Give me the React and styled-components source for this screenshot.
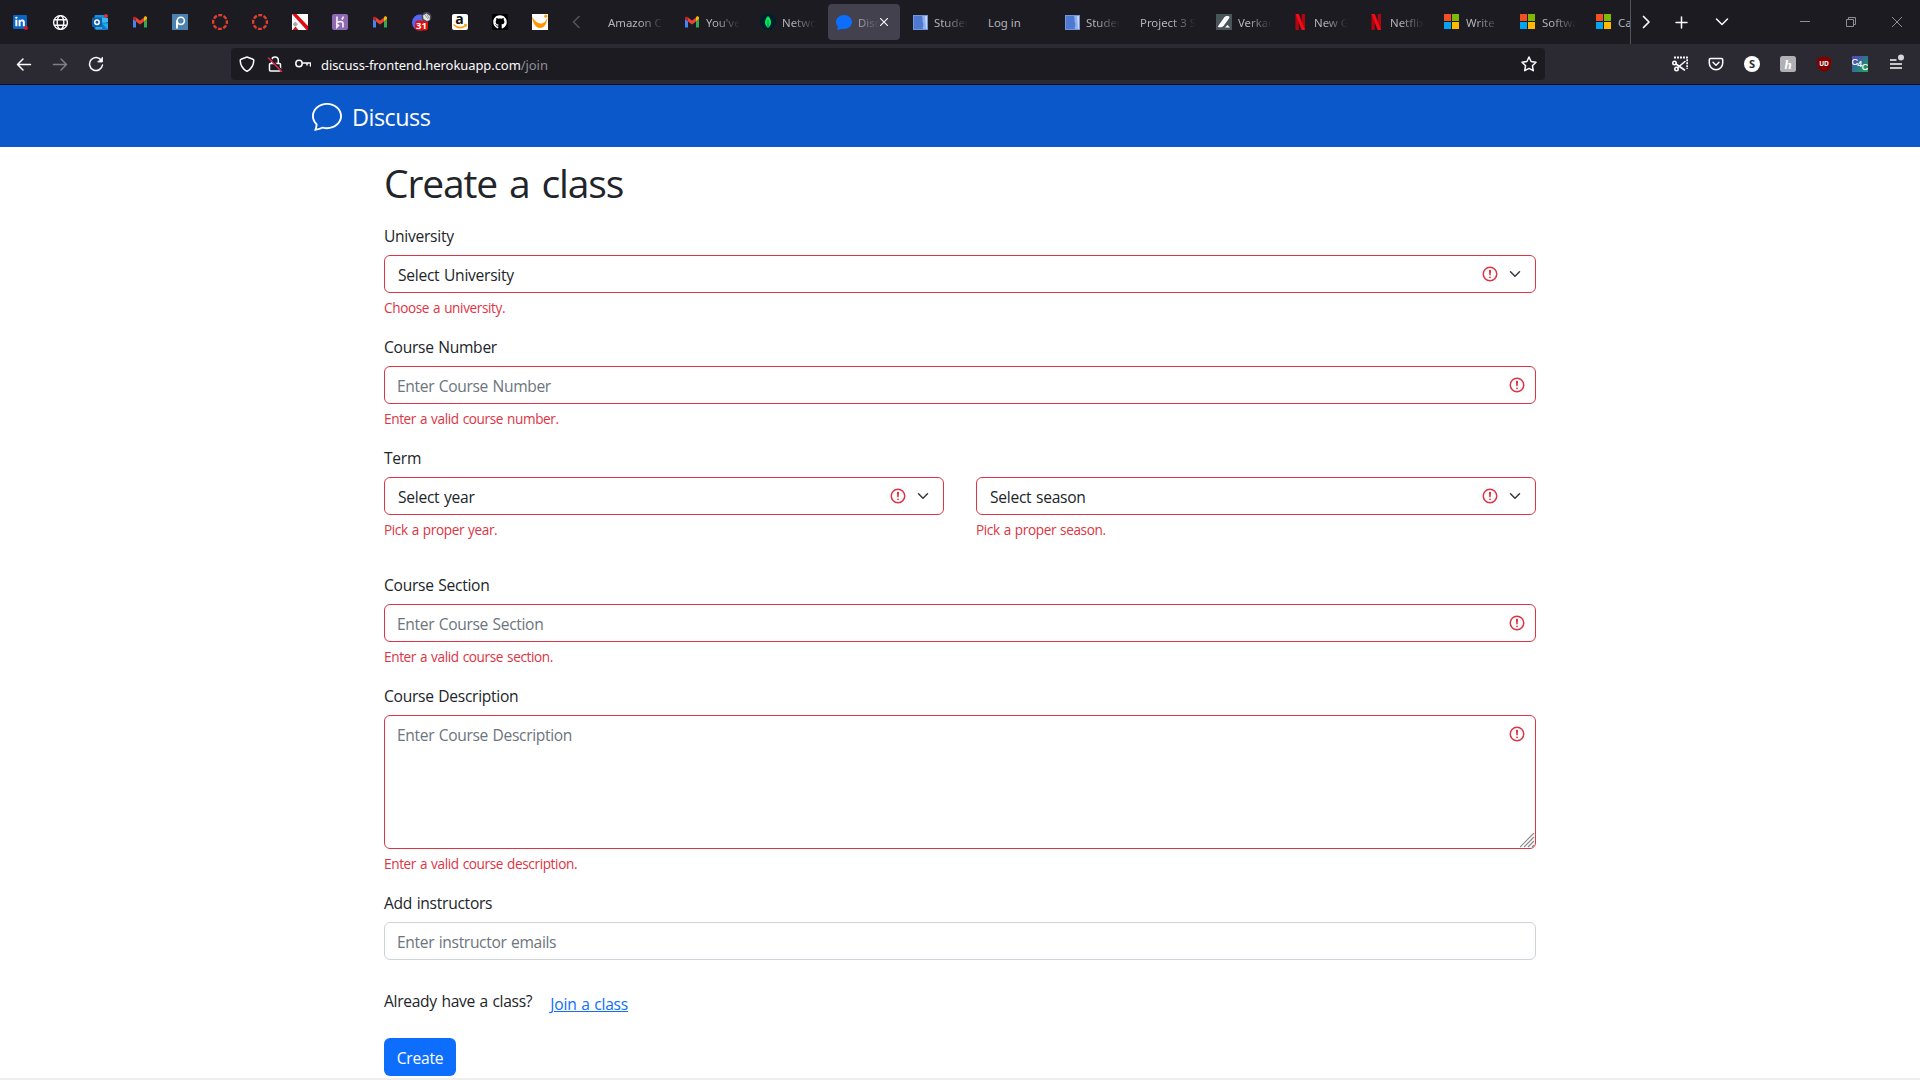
import React from "react";
import styled, { createGlobalStyle, css } from "styled-components";
import { BsChat, BsChatFill } from "react-icons/bs";
import { FaLinkedinIn, FaGithub } from "react-icons/fa";

const Global = createGlobalStyle`
  * { box-sizing: border-box; }
  html, body { margin: 0; padding: 0; height: 1080px; overflow: hidden; background: #fff; }
  body { font-family: "Open Sans", "Noto Sans", sans-serif; color: #212529; }
  svg { display: block; flex: none; }
`;

const Screen = styled.div`
  width: 1920px;
  height: 1080px;
  display: flex;
  flex-direction: column;
  overflow: hidden;
  border-bottom: 2px solid #eeeeee;
`;

/* ---------- browser tab strip ---------- */
const TabStrip = styled.div`
  height: 44px;
  flex: none;
  display: flex;
  align-items: stretch;
  background: #1c1b22;
  color: #fbfbfe;
`;
const PinnedTab = styled.div`
  width: 40px;
  display: flex;
  align-items: center;
  justify-content: center;
`;
const ScrollButton = styled.div`
  width: ${(p) => p.$w}px;
  display: flex;
  align-items: center;
  justify-content: center;
  padding-right: ${(p) => p.$shift ?? 0}px;
  opacity: ${(p) => (p.$dim ? 0.25 : 1)};
`;
const TabList = styled.div`
  width: 1033px;
  display: flex;
  overflow: hidden;
  border-right: 1px solid #55545c;
`;
const Tab = styled.div`
  flex: none;
  width: 72px;
  height: 36px;
  margin: 4px 2px;
  padding: 0 8px;
  display: flex;
  align-items: center;
  gap: 6px;
  border-radius: 4px;
  ${(p) => p.$active && css`background: #42414d;`}
`;
const TabLabel = styled.span`
  flex: 1;
  min-width: 0;
  overflow: hidden;
  white-space: nowrap;
  padding-top: 1px;
  font: 11.4px/18px "Noto Sans", sans-serif;
  color: #b4b4ba;
  ${(p) => !p.$whole && css`mask-image: linear-gradient(to left, transparent, #000 24px);`}
`;
const TabClose = styled.span`
  display: flex;
  margin: 0 4px 0 -6px;
`;
const WindowButtons = styled.div`
  flex: 1;
  display: flex;
  justify-content: flex-end;
`;
const WindowButton = styled.div`
  width: 46px;
  display: flex;
  align-items: center;
  justify-content: center;
`;

/* ---------- browser toolbar ---------- */
const Toolbar = styled.div`
  height: 41px;
  flex: none;
  display: flex;
  align-items: center;
  padding: 0 6px;
  background: #2b2a33;
  border-bottom: 1px solid #0c0c0d;
`;
const ToolButton = styled.div`
  width: 36px;
  height: 32px;
  display: flex;
  align-items: center;
  justify-content: center;
  opacity: ${(p) => (p.$dim ? 0.4 : 1)};
`;
const UrlBar = styled.div`
  width: 1314px;
  height: 32px;
  margin: 0 117px 0 117px;
  padding: 0 8px;
  display: flex;
  align-items: center;
  gap: 12px;
  border-radius: 4px;
  background: #1c1b22;
`;
const Url = styled.div`
  flex: 1;
  margin-left: -2px;
  padding-top: 2px;
  font: 13px/20px "Noto Sans", sans-serif;
  letter-spacing: -0.07px;
  color: #fbfbfe;
  span { color: #8f8f98; }
`;

/* ---------- site header ---------- */
const SiteHeader = styled.header`
  height: 62px;
  flex: none;
  display: flex;
  align-items: center;
  gap: 10px;
  padding-left: 312px;
  background: #0a58ca;
  color: #fff;
`;
const Brand = styled.span`
  padding-top: 2px;
  font-size: 23.4px;
  line-height: 36px;
  letter-spacing: -0.5px;
`;

/* ---------- form ---------- */
const Form = styled.form`
  width: 1152px;
  margin: 0 auto;
  padding-top: 12px;
  letter-spacing: -0.28px;
  word-spacing: 0.8px;
`;
const Title = styled.h1`
  margin: 0 0 16px;
  font-size: 39px;
  line-height: 48px;
  font-weight: 400;
  letter-spacing: -1.15px;
  word-spacing: 3px;
`;
const Field = styled.div`
  margin-bottom: ${(p) => p.$gap ?? 16}px;
`;
const Label = styled.label`
  display: block;
  padding-top: 1px;
  margin-bottom: 7px;
  font-size: 15.6px;
  line-height: 24px;
`;
const Box = styled.div`
  display: flex;
  align-items: ${(p) => (p.$tall ? "flex-start" : "center")};
  height: ${(p) => (p.$tall ? 134 : 38)}px;
  padding: ${(p) => (p.$tall ? "9px" : "0")} ${(p) => (p.$select ? 12 : 9)}px ${(p) => (p.$tall ? "9px" : "0")} 12px;
  border: 1px solid ${(p) => (p.$invalid ? "#dc3545" : "#ced4da")};
  border-radius: 6px;
  position: relative;
`;
const control = css`
  flex: 1;
  min-width: 0;
  border: 0;
  outline: 0;
  padding: 2px 0 0;
  margin: 0;
  background: transparent;
  font-family: inherit;
  font-size: 15.6px;
  line-height: 24px;
  letter-spacing: -0.34px;
  word-spacing: 0.8px;
  color: #212529;
  &::placeholder { color: #6c757d; opacity: 1; }
`;
const Input = styled.input`${control} height: 26px;`;
const TextArea = styled.textarea`${control} height: 116px; resize: none; margin-top: -4px;`;
const Select = styled.select`${control} appearance: none; height: 26px; padding-left: 1px; letter-spacing: -0.27px;`;
const Grip = styled.div`
  position: absolute;
  right: 0;
  bottom: 0;
`;
const Chevron = styled.span`
  display: flex;
  margin-left: 8px;
`;
const Feedback = styled.div`
  padding-top: 4px;
  font-size: 13.6px;
  line-height: 21px;
  letter-spacing: -0.38px;
  word-spacing: 0.8px;
  color: #dc3545;
`;
const Row = styled.div`
  display: grid;
  grid-template-columns: 1fr 1fr;
  gap: 32px;
`;
const JoinRow = styled.div`
  display: flex;
  align-items: flex-start;
  gap: 17px;
  height: 24px;
  margin: 29px 0 25px;
  font-size: 15.6px;
  line-height: 24px;
  letter-spacing: -0.3px;
`;
const JoinLink = styled.a`
  color: #0d6efd;
  text-decoration: underline;
  margin: 3px 0 0 1px;
  letter-spacing: -0.22px;
`;
const CreateButton = styled.button`
  display: block;
  width: 72px;
  height: 38px;
  padding: 2px 0 0;
  border: 0;
  border-radius: 6px;
  background: #0d6efd;
  color: #fff;
  font-family: inherit;
  font-size: 15.6px;
  line-height: 24px;
  letter-spacing: -0.2px;
`;

/* ---------- icons ---------- */
const Svg = ({ s = 16, children, ...rest }) => (
  <svg width={s} height={s} viewBox="0 0 16 16" fill="none" {...rest}>{children}</svg>
);
const Line = (p) => <Svg stroke="#fbfbfe" strokeWidth="1.2" strokeLinecap="round" strokeLinejoin="round" {...p} />;

const Alert = () => (
  <svg width="18" height="18" viewBox="0 0 12 12" fill="none" stroke="#dc3545">
    <circle cx="6" cy="6" r="4.5" />
    <path strokeLinejoin="round" d="M5.8 3.6h.4L6 6.5z" />
    <circle cx="6" cy="8.2" r=".6" fill="#dc3545" stroke="none" />
  </svg>
);
const Down = () => (
  <svg width="16" height="12" viewBox="0 0 16 16" fill="none" stroke="#343a40" strokeWidth="2" strokeLinecap="round" strokeLinejoin="round">
    <path d="m2 5 6 6 6-6" />
  </svg>
);
const Gmail = () => (
  <Svg>
    <path d="M1 13.4h3V7.2L1 4.9z" fill="#4285f4" />
    <path d="M12 13.4h3V4.9l-3 2.3z" fill="#34a853" />
    <path d="M12 3.6v3.7l3-2.3V4c0-1.500-1.600-2.200-2.600-1.300z" fill="#fbbc04" />
    <path d="M4 7.400V3.600l4 3 4-3v3.800l-4 3z" fill="#ea4335" />
    <path d="M1 4v1l3 2.300V3.600l-.5-.5C2.500 2.200 1 2.700 1 4z" fill="#c5221f" />
  </Svg>
);
const LinkedIn = () => (
  <Svg>
    <rect x="1" y="1" width="14" height="14" rx="1" fill="#0a66c2" />
    <FaLinkedinIn x="2.500" y="2.500" size="11" color="#fff" />
    <circle cx="14" cy="14" r="2" fill="#d7181f" />
  </Svg>
);
const Globe = () => (
  <Line strokeWidth="1.4">
    <circle cx="8.500" cy="8.500" r="6.900" />
    <ellipse cx="8.500" cy="8.500" rx="3.300" ry="6.900" />
    <path d="M2.400 5.800h12.200M2.400 11.200h12.200" />
  </Line>
);
const Outlook = () => (
  <Svg>
    <rect x="2.500" y="1" width="12" height="14.500" rx="1" fill="#1490df" />
    <path d="M9 4h7v4.500H9z" fill="#35b8f1" />
    <path d="M4 12l12-3v6.500H4z" fill="#28a8ea" />
    <path d="M10 9.500l6 6h-6z" fill="#1478c8" />
    <rect x="0" y="3.500" width="10" height="9.500" rx="1" fill="#0f5ea8" />
    <circle cx="5" cy="8.200" r="2.200" stroke="#fff" strokeWidth="1.500" />
    <circle cx="14" cy="2" r="2" fill="#d13438" />
  </Svg>
);
const Pearson = () => (
  <Svg>
    <rect width="16" height="16" fill="#4c82ad" />
    <circle cx="8.800" cy="6.800" r="3.600" stroke="#fff" strokeWidth="1.600" />
    <path d="M5 6.500V14.500" stroke="#fff" strokeWidth="2" />
  </Svg>
);
const Canvas = () => (
  <Svg><circle cx="8" cy="8" r="6.900" stroke="#e13f2b" strokeWidth="2.400" strokeDasharray="3.900 1.519" strokeDashoffset="1.950" /></Svg>
);
const Slash = () => (
  <Svg>
    <rect width="16" height="16" fill="#fff" />
    <path d="M0 0h4.500L16 12v4h-1.500z" fill="#e00b12" />
    <path d="M3.300 7.500l2.700 2.700-2 2H2.200L.8 10.200z" fill="#aaa" />
    <path d="M3.500 12.500l3 3.500H.5z" fill="#c9171b" />
  </Svg>
);
const Heroku = () => (
  <Svg>
    <rect width="16" height="16" rx="2" fill="#8d69b0" />
    <path d="M5 2.500v6c2-1 6-1.500 6 1v4M4.800 10v3.300l1.700-1.700zM11.200 2.500c0 1.200-.5 2.200-1.400 3" stroke="#f0eaf6" strokeWidth="1.700" />
  </Svg>
);
const CalendarSlot = styled.span`
  display: flex;
  margin-left: 4px;
`;
const Calendar = () => (
  <CalendarSlot>
    <svg width="20" height="20" viewBox="0 0 20 20">
      <circle cx="8" cy="10.500" r="8" fill="#5865f2" />
      <rect x="3" y="8.500" width="13" height="10" rx="3" fill="#e01010" />
      <text x="9.500" y="17.300" textAnchor="middle" fontSize="9.500" fontWeight="700" fill="#fff" fontFamily="Open Sans, sans-serif">31</text>
      <circle cx="14.500" cy="5" r="5" fill="#4a4952" />
      <path d="M11 3.500l3.500-2 3.500 2.500-.5 4-2.500 1-3.500-2z" fill="#e6e6e6" />
      <path d="M13 3l3 4M15 2.500l2 3.500" stroke="#777" strokeWidth=".7" />
    </svg>
  </CalendarSlot>
);
const Amazon = () => (
  <Svg>
    <rect width="16" height="16" rx="2" fill="#fff" />
    <text x="7.600" y="9.800" textAnchor="middle" fontSize="14" fontWeight="700" fill="#111" fontFamily="Open Sans, sans-serif">a</text>
    <path d="M2 11c3.500 3.200 8 3.200 11.500.6" stroke="#f90" strokeWidth="1.500" strokeLinecap="round" />
    <path d="M12 10.400l2.400-.1-.5 2.600" stroke="#f90" strokeWidth="1" />
  </Svg>
);
const GitHub = () => (
  <Svg>
    <rect width="16" height="16" rx="1.500" fill="#000" />
    <FaGithub x="1" y="1" size="14" color="#fff" />
  </Svg>
);
const Smile = () => (
  <Svg>
    <rect width="16" height="16" fill="#fff" />
    <path d="M0 2.500c.5 6 3.500 11.500 8 11.500s6.500-4 7.500-10.500c-2 4.500-4 6-7 6S2.500 7 0 2.500z" fill="#ff9500" />
    <circle cx="13.800" cy="2.200" r="1.600" fill="#ff9f1c" />
  </Svg>
);
const Mongo = () => (
  <Svg>
    <circle cx="8" cy="8" r="8" fill="#001e2b" />
    <path d="M8 2c4 4 4 8.500 0 12-4-3.500-4-8 0-12z" fill="#00ed64" />
    <path d="M8 6v7" stroke="#007a3c" strokeWidth="1" />
  </Svg>
);
const Doc = () => (
  <Svg>
    <rect x="1" y="1" width="15" height="15" fill="#4f78d0" />
    <path d="M10 2h4v13h-3c-1-2 1-3 0-6s0-5-1-7z" fill="#8fb0ea" />
    <path d="M13 2h2v13h-1z" fill="#c5d6f5" />
    <rect x="1.500" y="1.500" width="14" height="14" stroke="#7295dd" />
  </Svg>
);
const Pen = () => (
  <Svg>
    <rect width="16" height="16" fill="#4a5559" />
    <path d="M1.800 12.500L8.500 3c1.200-1.700 6-1.500 5 .8L7.500 12c-1 1.300-4.500 2-5.700.5z" fill="#fff" />
    <path d="M9 13.500l2.500-2.500 2.500 2.500z" fill="#fff" />
  </Svg>
);
const Netflix = () => (
  <Svg>
    <path d="M3.500 0h3.300v16H3.500zM9.700 0H13v16H9.700z" fill="#b1060f" />
    <path d="M3.500 0h3.300L13 16H9.700z" fill="#f50a17" />
  </Svg>
);
const Microsoft = () => (
  <Svg>
    <path d="M0 0h7v7H0z" fill="#f25022" /><path d="M8 0h7v7H8z" fill="#7fba00" />
    <path d="M0 8h7v7H0z" fill="#00a4ef" /><path d="M8 8h7v7H8z" fill="#ffb900" />
  </Svg>
);
const Discuss = () => <BsChatFill size={16} color="#0d6efd" />;

const PINNED = [LinkedIn, Globe, Outlook, Gmail, Pearson, Canvas, Canvas, Slash, Heroku, Gmail, Calendar, Amazon, GitHub, Smile];
const TABS = [
  { label: "Amazon C" },
  { icon: Gmail, label: "You've" },
  { icon: Mongo, label: "Netwo" },
  { icon: Discuss, label: "Disc", active: true },
  { icon: Doc, label: "Studen" },
  { label: "Log in", whole: true },
  { icon: Doc, label: "Studen" },
  { label: "Project 3 S" },
  { icon: Pen, label: "Verkac" },
  { icon: Netflix, label: "New G" },
  { icon: Netflix, label: "Netflix" },
  { icon: Microsoft, label: "Write" },
  { icon: Microsoft, label: "Softwa" },
  { icon: Microsoft, label: "Ca", whole: true },
];

const Extensions = () => (
  <>
    <ToolButton><Line strokeWidth="1.600">
      <circle cx="2.500" cy="7" r="1.700" /><circle cx="4.500" cy="13" r="1.700" />
      <path d="M4 8l8.500 6M5.800 11.500L13 5.500" />
      <path d="M2 1.500h13.300V13" strokeDasharray="2 1" strokeWidth="2" strokeLinecap="butt" />
    </Line></ToolButton>
    <ToolButton><Line strokeWidth="1.500">
      <path d="M2.500 2.500h11a1.200 1.200 0 0 1 1.200 1.200V7a6.700 6.700 0 0 1-13.400 0V3.700a1.200 1.200 0 0 1 1.200-1.200z" /><path d="M5 6.300l3 2.900 3-2.900" />
    </Line></ToolButton>
    <ToolButton><Svg><circle cx="8" cy="8" r="8" fill="#fff" /><text x="8" y="12" textAnchor="middle" fontSize="11" fontWeight="700" fill="#2b2a33" fontFamily="Open Sans, sans-serif">S</text></Svg></ToolButton>
    <ToolButton><Svg><rect width="16" height="16" rx="2.500" fill="#b1b1b5" /><text x="8" y="12.500" textAnchor="middle" fontSize="13" fontStyle="italic" fontWeight="700" fill="#fff" fontFamily="Liberation Serif, serif">h</text></Svg></ToolButton>
    <ToolButton><Svg><path d="M8 0c2 1.500 4.500 2 7 2v6c0 4-3 6.500-7 8-4-1.500-7-4-7-8V2c2.500 0 5-.5 7-2z" fill="#800000" /><text x="8" y="10" textAnchor="middle" fontSize="6.500" fontWeight="700" fill="#fff" fontFamily="Open Sans, sans-serif">UD</text></Svg></ToolButton>
    <ToolButton><Svg>
      <defs><linearGradient id="cc" x1="0" y1="0" x2="1" y2="1"><stop offset="0" stopColor="#5a3fc0" /><stop offset=".5" stopColor="#2f7390" /><stop offset="1" stopColor="#1faa4a" /></linearGradient></defs>
      <rect width="16" height="16" fill="url(#cc)" />
      <g fill="#fff" stroke="#fff" strokeWidth=".2" fontSize="9" fontFamily="Liberation Sans, sans-serif"><text x="-.5" y="8.500">C</text><text x="5.200" y="11.300">4</text><text x="9.800" y="14">C</text></g>
    </Svg></ToolButton>
    <ToolButton><Svg s={20} viewBox="0 0 20 20"><path d="M4 6h6.500M4 10h12M4 14h12" stroke="#fbfbfe" strokeWidth="1.400" /><circle cx="15" cy="3.500" r="3" fill="#d6d6da" /></Svg></ToolButton>
  </>
);

const SelectField = ({ label }) => (
  <Box $invalid $select>
    <Select><option>{label}</option></Select>
    <Alert />
    <Chevron><Down /></Chevron>
  </Box>
);

export default function App() {
  return (
    <Screen>
      <Global />
      <TabStrip>
        {PINNED.map((Icon, i) => <PinnedTab key={i}><Icon /></PinnedTab>)}
        <ScrollButton $w={38} $shift={6} $dim><Line strokeWidth="1.500"><path d="M11 2.500L5.500 8l5.500 5.500" /></Line></ScrollButton>
        <TabList>
          {TABS.map(({ icon: Icon, label, active, whole }, i) => (
            <Tab key={i} $active={active}>
              {Icon && <Icon />}
              <TabLabel $whole={whole}>{label}</TabLabel>
              {active && <TabClose><Svg s={8} viewBox="0 0 8 8" stroke="#fbfbfe" strokeWidth="1.100"><path d="M0 0l8 8M8 0L0 8" /></Svg></TabClose>}
            </Tab>
          ))}
        </TabList>
        <ScrollButton $w={30}><Line strokeWidth="1.700"><path d="M5.500 2.500L11 8l-5.500 5.500" /></Line></ScrollButton>
        <ScrollButton $w={42} $shift={2}><Line strokeWidth="1.500"><path d="M8.500 3v11M3 8.500h11" /></Line></ScrollButton>
        <ScrollButton $w={38}><Line strokeWidth="1.500"><path d="M2.500 5L8 10.500 13.500 5" /></Line></ScrollButton>
        <WindowButtons>
          <WindowButton><Svg s={10} viewBox="0 0 10 10" stroke="#8e8e93"><path d="M0 4.500h10" /></Svg></WindowButton>
          <WindowButton><Svg s={10} viewBox="0 0 10 10" stroke="#8e8e93"><path d="M.5 2.500h7v7h-7zM2.500 2.500v-2h7v7h-2" /></Svg></WindowButton>
          <WindowButton><Svg s={10} viewBox="0 0 10 10" stroke="#8e8e93"><path d="M0 0l10 10M10 0L0 10" /></Svg></WindowButton>
        </WindowButtons>
      </TabStrip>
      <Toolbar>
        <ToolButton><Line strokeWidth="1.500"><path d="M14.500 8.500h-13M7 3L1.500 8.500 7 14" /></Line></ToolButton>
        <ToolButton $dim><Line strokeWidth="1.500"><path d="M1.500 8.500h13M9 3l5.500 5.500L9 14" /></Line></ToolButton>
        <ToolButton><Line strokeWidth="1.500"><path d="M13.500 4.500A6.500 6.500 0 1 0 14.500 9" /><path d="M14.500 1.500v4.500H10z" fill="#fbfbfe" strokeWidth=".8" /></Line></ToolButton>
        <UrlBar>
          <Line strokeWidth="1.500"><path d="M8 1l6 2.200c.6.2.8.6.8 1.200-.2 5.500-2 8.500-6.800 11-4.800-2.500-6.600-5.500-6.800-11 0-.6.200-1 .8-1.200z" /></Line>
          <Line strokeWidth="1.500"><path d="M3.500 7.500h9c.6 0 1 .4 1 1V14c0 .6-.4 1-1 1h-9c-.6 0-1-.4-1-1V8.500c0-.6.4-1 1-1zM4.700 7V4.300a3.300 3.300 0 0 1 6.600 0V7" /><path d="M2.500 1.500l13 13.500" stroke="#1c1b22" strokeWidth="1.500" /><path d="M1.500 2l13 13.500" stroke="#e22850" /></Line>
          <Line strokeWidth="1.500"><circle cx="4" cy="7.500" r="3.200" /><path d="M7.500 7h8v3M12 7v2" /></Line>
          <Url>discuss-frontend.herokuapp.com<span>/join</span></Url>
          <Line strokeWidth="1.500"><path d="M8 1l2.100 4.500 4.900.7-3.600 3.500.9 5L8 12.400l-4.300 2.300.9-5L1 6.200l4.900-.7z" /></Line>
        </UrlBar>
        <Extensions />
      </Toolbar>
      <SiteHeader>
        <BsChat size={30} />
        <Brand>Discuss</Brand>
      </SiteHeader>
      <Form>
        <Title>Create a class</Title>
        <Field>
          <Label>University</Label>
          <SelectField label="Select University" />
          <Feedback>Choose a university.</Feedback>
        </Field>
        <Field>
          <Label>Course Number</Label>
          <Box $invalid><Input placeholder="Enter Course Number" /><Alert /></Box>
          <Feedback>Enter a valid course number.</Feedback>
        </Field>
        <Field $gap={32}>
          <Label>Term</Label>
          <Row>
            <div><SelectField label="Select year" /><Feedback>Pick a proper year.</Feedback></div>
            <div><SelectField label="Select season" /><Feedback>Pick a proper season.</Feedback></div>
          </Row>
        </Field>
        <Field>
          <Label>Course Section</Label>
          <Box $invalid><Input placeholder="Enter Course Section" /><Alert /></Box>
          <Feedback>Enter a valid course section.</Feedback>
        </Field>
        <Field>
          <Label>Course Description</Label>
          <Box $invalid $tall>
            <TextArea placeholder="Enter Course Description" />
            <Alert />
            <Grip><Svg s={15} viewBox="0 0 15 15" stroke="#8a8a8a" strokeWidth="1.200"><path d="M0 14L14 0M4 14L14 4M8 14l6-6M12 14l2-2" /></Svg></Grip>
          </Box>
          <Feedback>Enter a valid course description.</Feedback>
        </Field>
        <Field $gap={0}>
          <Label>Add instructors</Label>
          <Box><Input placeholder="Enter instructor emails" /></Box>
        </Field>
        <JoinRow>
          <span>Already have a class?</span>
          <JoinLink>Join a class</JoinLink>
        </JoinRow>
        <CreateButton type="button">Create</CreateButton>
      </Form>
    </Screen>
  );
}
